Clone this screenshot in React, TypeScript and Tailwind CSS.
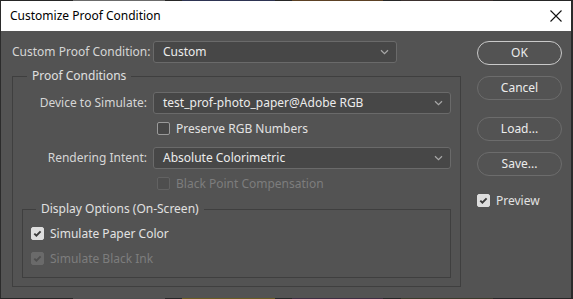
import React from "react";

const FONT = { fontFamily: '"Noto Sans", "Open Sans", sans-serif' };

const TOP_STRIP = [
  { w: 73, c: "bg-[#262626]" },
  { w: 92, c: "bg-[#6b6b6b]" },
  { w: 17, c: "bg-[#262626]" },
  { w: 93, c: "bg-[#2d3352]" },
  { w: 17, c: "bg-[#262626]" },
  { w: 91, c: "bg-[#5c4124]" },
  { w: 18, c: "bg-[#262626]" },
  { w: 92, c: "bg-[#3b302e]" },
  { w: 80, c: "bg-[#262626]" },
];

const BOTTOM_STRIP = [
  { w: 73, c: "bg-[#262626]" },
  { w: 92, c: "bg-[#4f4f4f]" },
  { w: 17, c: "bg-[#262626]" },
  { w: 93, c: "bg-[#6a5b22]" },
  { w: 17, c: "bg-[#262626]" },
  { w: 91, c: "bg-[#3f3043]" },
  { w: 18, c: "bg-[#262626]" },
  { w: 92, c: "bg-[#3b3b2d]" },
  { w: 80, c: "bg-[#262626]" },
];

function Strip({ parts }: { parts: { w: number; c: string }[] }) {
  return (
    <div className="flex h-px shrink-0">
      {parts.map((p, i) => (
        <div key={i} className={`h-px ${p.c}`} style={{ width: p.w }} />
      ))}
    </div>
  );
}

function Chevron() {
  return (
    <svg width="9" height="6" viewBox="0 0 9 6" className="shrink-0">
      <path d="M1 1.2 L4.5 4.6 L8 1.2" fill="none" stroke="#a8a8a8" strokeWidth="1.2" />
    </svg>
  );
}

function Select({ value, width }: { value: string; width: string }) {
  return (
    <div
      className={`${width} h-[22px] flex items-center justify-between rounded-[3px] border border-[#6a6a6a] bg-[#474747] pl-[9px] pr-[7px] text-[12px] text-[#ececec] whitespace-nowrap`}
    >
      <span>{value}</span>
      <Chevron />
    </div>
  );
}

function Check({
  checked,
  disabled,
  label,
}: {
  checked?: boolean;
  disabled?: boolean;
  label: string;
}) {
  let box = "border border-[#9a9a9a] bg-[#474747]";
  if (checked && !disabled) box = "bg-[#dedede] border border-[#dedede]";
  if (checked && disabled) box = "bg-[#6a6a6a] border border-[#6a6a6a]";
  if (!checked && disabled) box = "border border-[#626262] bg-[#4e4e4e]";
  return (
    <div className="flex items-center h-[13px] gap-[6px]">
      <div className={`w-[13px] h-[13px] rounded-[2px] flex items-center justify-center ${box}`}>
        {checked && (
          <svg width="11" height="11" viewBox="0 0 11 11">
            <path
              d="M2.3 5.6 L4.4 7.7 L8.6 3.3"
              fill="none"
              stroke={disabled ? "#4f4f4f" : "#3a3a3a"}
              strokeWidth="1.9"
            />
          </svg>
        )}
      </div>
      <span
        className={`text-[12px] leading-none whitespace-nowrap ${disabled ? "text-[#7d7d7d]" : "text-[#e2e2e2]"}`}
      >
        {label}
      </span>
    </div>
  );
}

function Button({ label, primary }: { label: string; primary?: boolean }) {
  return (
    <div
      className={`h-[24px] w-[85px] rounded-full flex items-center justify-center text-[12px] text-[#ececec] ${
        primary ? "border-[1.5px] border-[#c9c9c9]" : "border-[1.5px] border-[#6c6c6c]"
      }`}
    >
      {label}
    </div>
  );
}

export default function App() {
  return (
    <div className="w-[573px] h-[299px] flex flex-col bg-[#262626] overflow-hidden" style={FONT}>
      <Strip parts={TOP_STRIP} />
      <div className="flex flex-1 min-h-0">
        <div className="w-px bg-[#2b2b2b]" />
        <div className="flex-1 flex flex-col bg-[#535353]">
          {/* title bar */}
          <div className="h-[30px] bg-white flex items-center justify-between pl-[9px] pr-[9px] shrink-0">
            <span className="text-[12px] text-black">Customize Proof Condition</span>
            <svg width="12" height="12" viewBox="0 0 12 12">
              <path d="M0.5 0.5 L11.5 11.5 M11.5 0.5 L0.5 11.5" stroke="#111" strokeWidth="1.1" />
            </svg>
          </div>

          <div className="flex flex-1 pl-[11px] pt-[10px]">
            {/* main column */}
            <div className="w-[449px] flex flex-col">
              <div className="flex items-center h-[22px]">
                <span className="w-[135px] text-[12px] text-[#d6d6d6] whitespace-nowrap">
                  Custom Proof Condition:
                </span>
                <div className="ml-[6px]">
                  <Select value="Custom" width="w-[244px]" />
                </div>
              </div>

              <fieldset className="mt-[5px] border border-[#3f3f3f] p-0 m-0 w-[449px] h-[219px] flex flex-col">
                <legend className="ml-[14px] px-[5px] text-[12px] leading-[16px] text-[#e0e0e0]">
                  Proof Conditions
                </legend>
                <div className="flex items-center h-[22px] mt-[8px]">
                  <span className="w-[134px] text-right text-[12px] text-[#d6d6d6] whitespace-nowrap">
                    Device to Simulate:
                  </span>
                  <div className="ml-[6px]">
                    <Select value="test_prof-photo_paper@Adobe RGB" width="w-[298px]" />
                  </div>
                </div>
                <div className="ml-[144px] mt-[8px]">
                  <Check label="Preserve RGB Numbers" />
                </div>
                <div className="flex items-center h-[22px] mt-[12px]">
                  <span className="w-[134px] text-right text-[12px] text-[#d6d6d6] whitespace-nowrap">
                    Rendering Intent:
                  </span>
                  <div className="ml-[6px]">
                    <Select value="Absolute Colorimetric" width="w-[298px]" />
                  </div>
                </div>
                <div className="ml-[144px] mt-[8px]">
                  <Check label="Black Point Compensation" disabled />
                </div>

                <fieldset className="mt-[11px] ml-[9px] w-[429px] h-[77px] border border-[#3f3f3f] m-0 p-0 pl-[8px] flex flex-col">
                  <legend className="ml-[5px] px-[5px] text-[12px] leading-[16px] text-[#e0e0e0]">
                    Display Options (On-Screen)
                  </legend>
                  <div className="mt-[10px]">
                    <Check label="Simulate Paper Color" checked />
                  </div>
                  <div className="mt-[12px]">
                    <Check label="Simulate Black Ink" checked disabled />
                  </div>
                </fieldset>
              </fieldset>
            </div>

            {/* right column */}
            <div className="ml-[16px] w-[85px] flex flex-col">
              <Button label="OK" primary />
              <div className="mt-[11px]">
                <Button label="Cancel" />
              </div>
              <div className="mt-[17px]">
                <Button label="Load..." />
              </div>
              <div className="mt-[11px]">
                <Button label="Save..." />
              </div>
              <div className="mt-[18px]">
                <Check label="Preview" checked />
              </div>
            </div>
          </div>
        </div>
        <div className="w-[2px] bg-[#2b2b2b]" />
      </div>
      <Strip parts={BOTTOM_STRIP} />
    </div>
  );
}
